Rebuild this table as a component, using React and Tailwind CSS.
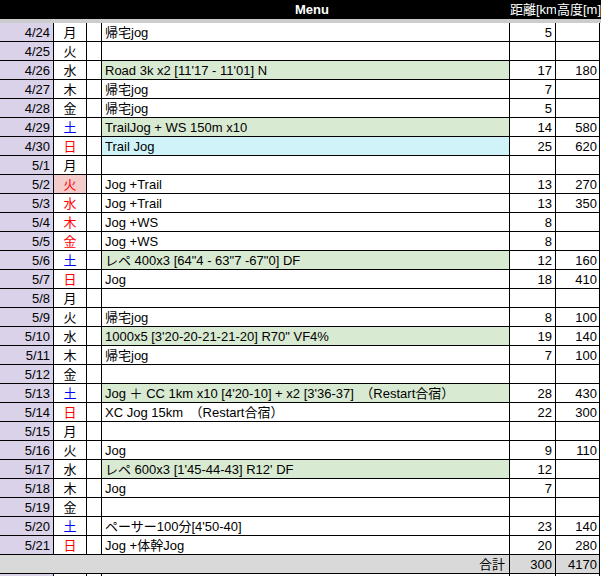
import React from "react";

const rows = [
  ["4/24", "月", "", "", "帰宅jog", "", "5", ""],
  ["4/25", "火", "", "", "", "", "", ""],
  ["4/26", "水", "", "", "Road 3k x2 [11'17 - 11'01] N", "g", "17", "180"],
  ["4/27", "木", "", "", "帰宅jog", "", "7", ""],
  ["4/28", "金", "", "", "帰宅jog", "", "5", ""],
  ["4/29", "土", "b", "", "TrailJog + WS 150m x10", "g", "14", "580"],
  ["4/30", "日", "r", "", "Trail Jog", "c", "25", "620"],
  ["5/1", "月", "", "", "", "", "", ""],
  ["5/2", "火", "r", "p", "Jog +Trail", "", "13", "270"],
  ["5/3", "水", "r", "", "Jog +Trail", "", "13", "350"],
  ["5/4", "木", "r", "", "Jog +WS", "", "8", ""],
  ["5/5", "金", "r", "", "Jog +WS", "", "8", ""],
  ["5/6", "土", "b", "", "レペ 400x3 [64\"4 - 63\"7 -67\"0] DF", "g", "12", "160"],
  ["5/7", "日", "r", "", "Jog", "", "18", "410"],
  ["5/8", "月", "", "", "", "", "", ""],
  ["5/9", "火", "", "", "帰宅jog", "", "8", "100"],
  ["5/10", "水", "", "", "1000x5 [3'20-20-21-21-20] R70\" VF4%", "g", "19", "140"],
  ["5/11", "木", "", "", "帰宅jog", "", "7", "100"],
  ["5/12", "金", "", "", "", "", "", ""],
  ["5/13", "土", "b", "", "Jog ＋ CC 1km x10 [4'20-10] + x2 [3'36-37]　（Restart合宿）", "g", "28", "430"],
  ["5/14", "日", "r", "", "XC Jog 15km　（Restart合宿）", "", "22", "300"],
  ["5/15", "月", "", "", "", "", "", ""],
  ["5/16", "火", "", "", "Jog", "", "9", "110"],
  ["5/17", "水", "", "", "レペ 600x3 [1'45-44-43] R12' DF", "g", "12", ""],
  ["5/18", "木", "", "", "Jog", "", "7", ""],
  ["5/19", "金", "", "", "", "", "", ""],
  ["5/20", "土", "b", "", "ペーサー100分[4'50-40]", "", "23", "140"],
  ["5/21", "日", "r", "", "Jog +体幹Jog", "", "20", "280"],
];

const font = {
  fontFamily: '"Liberation Sans", Arial, "Noto Sans CJK JP", sans-serif',
};

function dayColor(c) {
  if (c === "b") return "text-[#0000ff]";
  if (c === "r") return "text-[#ff0000]";
  return "text-black";
}

function menuBg(c) {
  if (c === "g") return "bg-[#d9ead3]";
  if (c === "c") return "bg-[#cff3f8]";
  return "bg-white";
}

const cell = "h-[19px] border-b border-r border-black leading-[20px] overflow-hidden whitespace-nowrap";

export default function App() {
  return (
    <div
      className="w-[601px] h-[576px] overflow-hidden bg-white text-[13px] text-black"
      style={font}
    >
      {/* header */}
      <div className="grid grid-cols-[54px_33px_15px_408px_46px_45px] h-[19px] bg-black text-white leading-[20px]">
        <div />
        <div />
        <div />
        <div className="text-center font-bold pl-[12px]">Menu</div>
        <div className="overflow-hidden whitespace-nowrap">距離[km]</div>
        <div className="whitespace-nowrap pl-[1px]">高度[m]</div>
      </div>
      <div className="h-[4px] bg-[#cccccc]" />

      {rows.map((r, i) => (
        <div
          key={i}
          className="grid grid-cols-[54px_33px_15px_408px_46px_44px_1px]"
        >
          <div className={`${cell} bg-[#d9d2e9] text-right pr-[3px]`}>{r[0]}</div>
          <div
            className={`${cell} text-center ${dayColor(r[2])} ${
              r[3] === "p" ? "bg-[#f4cccc]" : "bg-white"
            }`}
          >
            {r[1]}
          </div>
          <div className={`${cell} bg-white`} />
          <div className={`${cell} ${menuBg(r[5])} pl-[3px]`}>{r[4]}</div>
          <div className={`${cell} bg-white text-right pr-[3px]`}>{r[6]}</div>
          <div className={`${cell} bg-white text-right pr-[2px]`}>{r[7]}</div>
          <div />
        </div>
      ))}

      {/* total */}
      <div className="grid grid-cols-[510px_46px_44px_1px]">
        <div className={`${cell} bg-[#d9d9d9] text-right pr-[4px]`}>合計</div>
        <div className={`${cell} bg-[#d9d9d9] text-right pr-[3px]`}>300</div>
        <div className={`${cell} bg-[#d9d9d9] text-right pr-[2px]`}>4170</div>
        <div />
      </div>
      <div className="grid grid-cols-[54px_33px_15px_408px_46px_44px_1px]">
        <div className={`${cell} bg-[#d9d2e9]`} />
        <div className={`${cell} bg-white`} />
        <div className={`${cell} bg-white`} />
        <div className={`${cell} bg-white`} />
        <div className={`${cell} bg-white`} />
        <div className={`${cell} bg-white`} />
        <div />
      </div>
    </div>
  );
}
